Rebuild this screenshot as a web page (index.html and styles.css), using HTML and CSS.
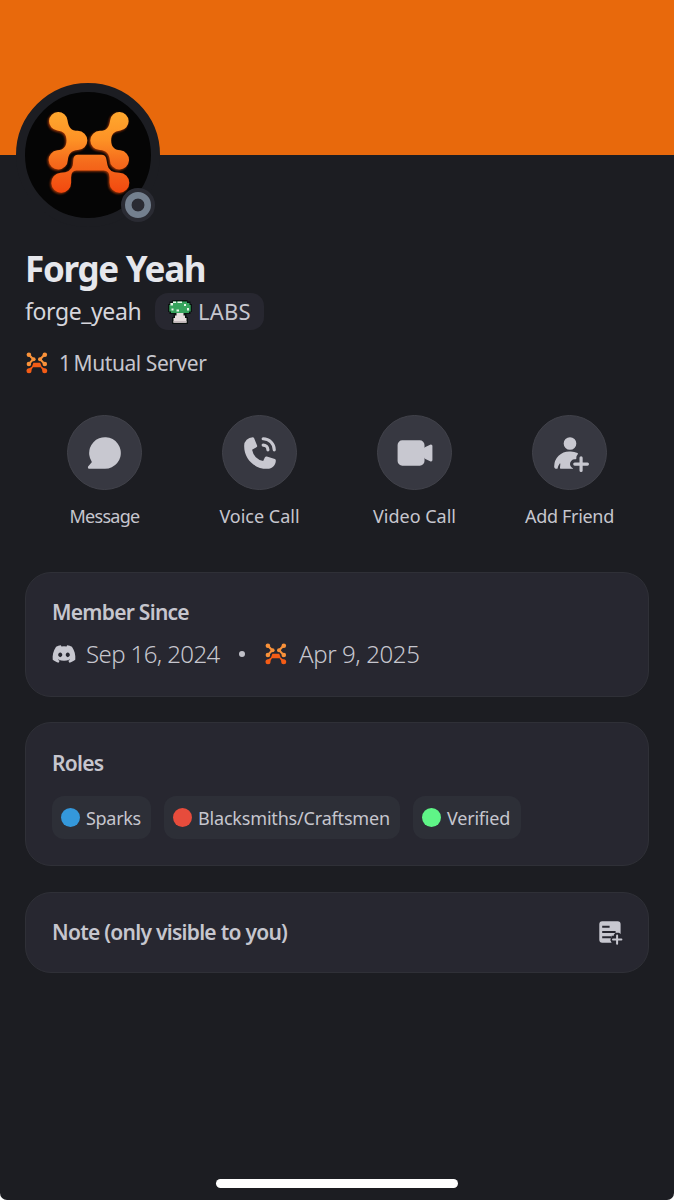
FILE: index.html
```html
<!DOCTYPE html>
<html lang="en">
<head>
<meta charset="utf-8">
<title>Forge Yeah</title>
<link rel="stylesheet" href="styles.css">
</head>
<body>
<svg class="defs" width="0" height="0" aria-hidden="true">
  <defs>
    <linearGradient id="ember" gradientUnits="userSpaceOnUse" x1="0" y1="35" x2="0" y2="280">
      <stop offset="0" stop-color="#ffa82e"/><stop offset=".35" stop-color="#fd9125"/><stop offset=".62" stop-color="#f56b1c"/><stop offset="1" stop-color="#f2480f"/>
    </linearGradient>
    <symbol id="server" viewBox="0 0 22 22">
      <path d="M3.2 3 7.2 7.2 3.2 11.6M18.2 3 14.2 7.2 18.2 11.6" fill="none" stroke="#f9923a" stroke-width="2.1"/>
      <g fill="#f9923a"><circle cx="2.9" cy="2.8" r="2.3"/><circle cx="18.8" cy="2.8" r="2.3"/><circle cx="7.6" cy="7.2" r="2"/><circle cx="14" cy="7.2" r="2"/><circle cx="2.9" cy="12" r="2.3"/><circle cx="18.8" cy="12" r="2.3"/></g>
      <g fill="#f45c16"><path d="M7.4 10.8H14.2L15.6 14.5 19 17 17 19 14.6 15.3H7L4.8 19 2.6 17 6 14.5Z"/><circle cx="3" cy="18.8" r="2.5"/><circle cx="18.7" cy="18.8" r="2.5"/></g>
    </symbol>
  </defs>
</svg>
<main class="profile">
  <header class="banner">
    <div class="avatar">
      <svg class="logo" viewBox="22 35 248 248">
        <g fill="url(#ember)">
          <path id="arm" d="M81 60C84 82 92 92 112 92A29 29 0 0 1 112 150C92 152 84 162 82 180A29 29 0 1 1 50 151C70 149 78 138 78 121C78 104 70 93 50 91A28 28 0 1 1 81 60Z"/>
          <use href="#arm" transform="matrix(-1 0 0 1 291 0)"/>
          <path d="M112 164H184Q196 164 198 176L202 196Q206 218 238 219A30 30 0 1 1 208 249V232Q208 212 190 212H108Q92 212 92 232V249A30 30 0 1 1 60 219Q92 218 97 196L99 176Q101 164 112 164Z"/>
        </g>
      </svg>
      <span class="status"></span>
    </div>
  </header>

  <section class="identity">
    <h1 class="name">Forge Yeah</h1>
    <div class="handle-row">
      <span class="handle">forge_yeah</span>
      <span class="tag">
        <svg class="mushroom" viewBox="0 0 24 24">
          <path fill="#0b1210" d="M4.5 0H19.5V1.5H22.5V4H24V12H22.5V14H18.5V17H20V24H4V17H5.5V14H1.5V12H0V4H1.5V1.5H4.5Z"/>
          <path fill="#36a35c" d="M5 1.5H19V3H21.5V5H22.7V11.5H21V13H3V11.5H1.3V5H2.5V3H5Z"/>
          <path fill="#e9f6e9" d="M5 1.5H8V3H5V5.5H2.5V3H5ZM9.5 1.5H14V3H9.5ZM16 4H18V6H16ZM3.5 8.5H5.5V10.5H3.5ZM8.5 9.5H11V11.5H8.5ZM19 8H21V10.5H19Z"/>
          <path fill="#e6dddd" d="M8.5 13H15.5V15.5H17V18H18.5V22.7H5.5V18H7V15.5H8.5Z"/>
          <path fill="#c5babd" d="M5.5 21H18.5V22.7H5.5Z"/>
        </svg>
        <span class="tag-text">LABS</span>
      </span>
    </div>
    <div class="mutual"><svg class="server"><use href="#server"/></svg><span class="mutual-text"><span class="count">1</span>Mutual Server</span></div>
  </section>

  <nav class="actions">
    <div class="action">
      <span class="disc"><svg viewBox="0 0 24 24"><path d="M12 22a10 10 0 1 0-8.45-4.64c.13.19.11.44-.04.61l-2.06 2.37A1 1 0 0 0 2.2 22H12Z"/></svg></span>
      <span class="label l-message">Message</span>
    </div>
    <div class="action">
      <span class="disc"><svg viewBox="0 0 24 24"><path d="M2 7.4A5.4 5.4 0 0 1 7.4 2c.36 0 .7.22.83.55l1.93 4.64a1 1 0 0 1-.43 1.25L7 10a8.52 8.52 0 0 0 7 7l1.12-2.24a1 1 0 0 1 1.19-.51l5.06 1.56c.38.11.63.46.63.85C22 19.6 19.6 22 16.66 22h-.37C8.39 22 2 15.6 2 7.71V7.4ZM13 3a1 1 0 0 1 1-1 8 8 0 0 1 8 8 1 1 0 1 1-2 0 6 6 0 0 0-6-6 1 1 0 0 1-1-1ZM13 7a1 1 0 0 1 1-1 4 4 0 0 1 4 4 1 1 0 1 1-2 0 2 2 0 0 0-2-2 1 1 0 0 1-1-1Z"/></svg></span>
      <span class="label">Voice Call</span>
    </div>
    <div class="action">
      <span class="disc"><svg viewBox="0 0 24 24"><path d="M4 4a3 3 0 0 0-3 3v10a3 3 0 0 0 3 3h11a3 3 0 0 0 3-3v-2.12a1 1 0 0 0 .55.9l3 1.5a1 1 0 0 0 1.45-.9V7.62a1 1 0 0 0-1.45-.9l-3 1.5a1 1 0 0 0-.55.9V7a3 3 0 0 0-3-3H4Z"/></svg></span>
      <span class="label">Video Call</span>
    </div>
    <div class="action">
      <span class="disc"><svg viewBox="0 0 24 24"><path d="M19 14a1 1 0 0 1 1 1v3h3a1 1 0 0 1 0 2h-3v3a1 1 0 0 1-2 0v-3h-3a1 1 0 1 1 0-2h3v-3a1 1 0 0 1 1-1ZM16.83 12.93c.26-.27.26-.75-.08-.92A9.5 9.5 0 0 0 12.47 11h-.94A9.53 9.53 0 0 0 2 20.53c0 .81.66 1.47 1.47 1.47h.22c.24 0 .44-.17.5-.4.29-1.12.84-2.17 1.32-2.91.14-.21.43-.1.4.15l-.26 2.61c-.02.3.2.55.5.55h7.64c.12 0 .17-.31.06-.36C12.82 21.14 12 20.22 12 19a3 3 0 0 1 3-3h.5a.5.5 0 0 0 .5-.5V15c0-.8.31-1.53.83-2.07ZM12 10a4 4 0 1 0 0-8 4 4 0 0 0 0 8Z"/></svg></span>
      <span class="label l-friend">Add Friend</span>
    </div>
  </nav>

  <section class="card member">
    <h2>Member Since</h2>
    <div class="dates">
      <svg class="discord" viewBox="0 0 24 24"><path d="M19.27 5.33C17.94 4.71 16.5 4.26 15 4a.09.09 0 0 0-.07.03c-.18.33-.39.76-.53 1.09a16.09 16.09 0 0 0-4.8 0c-.14-.34-.35-.76-.54-1.09-.01-.02-.04-.03-.07-.03-1.5.26-2.93.71-4.27 1.33-.01 0-.02.01-.03.02-2.72 4.07-3.47 8.03-3.1 11.95 0 .02.01.04.03.05 1.8 1.32 3.53 2.12 5.24 2.65.03.01.06 0 .07-.02.4-.55.76-1.13 1.07-1.74.02-.04 0-.08-.04-.09-.57-.22-1.11-.48-1.64-.78-.04-.02-.04-.08-.01-.11.11-.08.22-.17.33-.25.02-.02.05-.02.07-.01 3.44 1.57 7.15 1.57 10.55 0 .02-.01.05-.01.07.01.11.09.22.17.33.26.04.03.04.09-.01.11-.52.31-1.07.56-1.64.78-.04.01-.05.06-.04.09.32.61.68 1.19 1.07 1.74.03.01.06.02.09.01 1.72-.53 3.45-1.33 5.25-2.65.02-.01.03-.03.03-.05.44-4.53-.73-8.46-3.1-11.95-.01-.01-.02-.02-.04-.02zM8.52 14.91c-1.03 0-1.89-.95-1.89-2.12s.84-2.12 1.89-2.12c1.06 0 1.9.96 1.89 2.12 0 1.17-.84 2.12-1.89 2.12zm6.97 0c-1.03 0-1.89-.95-1.89-2.12s.84-2.12 1.89-2.12c1.06 0 1.9.96 1.89 2.12 0 1.17-.83 2.12-1.89 2.12z"/></svg>
      <span class="date d-sep">Sep 16, 2024</span>
      <span class="bullet"></span>
      <svg class="server"><use href="#server"/></svg>
      <span class="date d-apr">Apr 9, 2025</span>
    </div>
  </section>

  <section class="card roles">
    <h2>Roles</h2>
    <div class="chips">
      <span class="chip c-sparks"><i class="dot blue"></i><span>Sparks</span></span>
      <span class="chip c-smiths"><i class="dot red"></i><span>Blacksmiths/Craftsmen</span></span>
      <span class="chip c-verified"><i class="dot green"></i><span>Verified</span></span>
    </div>
  </section>

  <section class="card note">
    <h2>Note (only visible to you)</h2>
    <svg class="note-icon" viewBox="0 0 26 26">
      <path fill="#c8c8d0" d="M4.3 1.3H19.6A3 3 0 0 1 22.6 4.3V14L21 12.8H17.4L15.8 14.8V15.8H13.6V18.6L12.6 20.4 13.6 22.7H4.3A3 3 0 0 1 1.3 19.7V4.3A3 3 0 0 1 4.3 1.3Z"/>
      <path stroke="#272730" stroke-width="2" d="M4.2 6.8H11.6M4.2 12H17.6M4.2 17.2H13.5"/>
      <path stroke="#272730" stroke-width="5" stroke-linecap="round" d="M19.1 16.6V24M15 19.5H23.4"/>
      <path stroke="#c8c8d0" stroke-width="2" stroke-linecap="round" d="M19.1 15.4V23.8M15 19.5H23.4"/>
    </svg>
  </section>
  <div class="home-bar"></div>
</main>
</body>
</html>
```
FILE: styles.css
```css
* { box-sizing: border-box; }
body { margin: 0; background: #fff; font-family: "Noto Sans", "Open Sans", sans-serif; }
.defs { position: absolute; }
svg { display: block; flex: none; }
h1, h2 { margin: 0; }
.profile { display: flex; flex-direction: column; width: 674px; height: 1200px; background: #1c1d22; color: #c6c6ce; border-radius: 0 0 7px 7px; overflow: hidden; white-space: nowrap; }

.banner { height: 155px; flex: none; background: #e8690c; padding: 83px 0 0 16px; }
.avatar { position: relative; width: 144px; height: 144px; border-radius: 50%; border: 9px solid #1c1d22; background: #050505; display: flex; justify-content: center; padding-top: 20px; }
.logo { width: 82px; height: 82px; margin-left: 1px; filter: drop-shadow(-1px 1px 1px #a33505); }
.status { position: absolute; left: 96px; top: 96px; width: 34px; height: 34px; border-radius: 50%; border: 4px solid #2a2b33; background: radial-gradient(circle, #2a2b33 6px, #74808f 6.8px); }

.identity { padding: 95px 25px 0; display: flex; flex-direction: column; }
.name { font-size: 35px; line-height: 38px; font-weight: 700; letter-spacing: -1.3px; color: #e6e7ec; }
.handle-row { display: flex; align-items: center; margin-top: 5px; height: 37px; }
.handle { width: 130px; font-size: 23px; line-height: 37px; letter-spacing: -.4px; color: #d6d6dc; }
.tag { display: flex; align-items: center; width: 109px; height: 37px; padding-left: 13px; gap: 6px; border-radius: 13px; background: #272730; }
.mushroom { width: 24px; height: 24px; }
.tag-text { font-size: 22px; line-height: 37px; letter-spacing: .2px; }
.mutual { display: flex; align-items: center; gap: 11px; margin-top: 18px; height: 30px; padding-left: 1px; font-size: 21px; letter-spacing: -.43px; }
.server { width: 22px; height: 22px; }
.count { margin-right: 3px; }

.actions { display: grid; grid-template-columns: repeat(4, 155px); padding: 37px 27px 0; }
.action { display: flex; flex-direction: column; align-items: center; }
.disc { display: grid; place-items: center; width: 75px; height: 75px; border-radius: 50%; background: #373841; border: 1px solid #41424a; }
.disc svg { width: 38px; height: 38px; fill: #c8c8d0; }
.label { margin-top: 13px; font-size: 18px; line-height: 26px; }
.l-message { letter-spacing: -.7px; }
.l-friend { letter-spacing: -.33px; }

.card { margin: 0 25px; padding: 0 26px; border: 1px solid #2f3037; border-radius: 26px; background: #272730; }
.card h2 { font-size: 21px; line-height: 28px; font-weight: 600; letter-spacing: -.73px; }
.member { margin-top: 43px; height: 125px; padding-top: 25px; }
.dates { display: flex; align-items: center; margin-top: 11px; height: 34px; }
.discord { width: 26px; height: 26px; fill: #c8c8d0; margin-left: -1px; }
.date { font-size: 24px; font-weight: 300; line-height: 34px; }
.d-sep { margin-left: 9px; width: 135px; letter-spacing: -.6px; }
.bullet { width: 6px; height: 6px; margin: 0 20px 0 18px; border-radius: 50%; background: #c0c0c8; }
.d-apr { margin-left: 12px; letter-spacing: -.4px; }

.roles { margin-top: 25px; height: 144px; padding-top: 26px; }
.chips { display: flex; gap: 13px; margin-top: 19px; }
.chip { display: flex; align-items: center; gap: 6px; height: 43px; padding-left: 9px; border-radius: 12px; background: #2d2f37; font-size: 18px; }
.c-sparks { width: 99px; letter-spacing: -.3px; }
.c-smiths { width: 236px; letter-spacing: -.18px; }
.c-verified { width: 108px; letter-spacing: -.2px; }
.dot { width: 19px; height: 19px; border-radius: 50%; }
.blue { background: #3498db; }
.red { background: #e74c3c; }
.green { background: #5ff587; }

.note { margin-top: 26px; height: 81px; display: flex; align-items: center; justify-content: space-between; padding-right: 24px; }
.note h2 { padding-bottom: 2px; }
.note-icon { width: 26px; height: 26px; fill: none; }
.home-bar { align-self: center; margin: auto 0 12px; width: 242px; height: 9px; border-radius: 5px; background: #fff; }
```
